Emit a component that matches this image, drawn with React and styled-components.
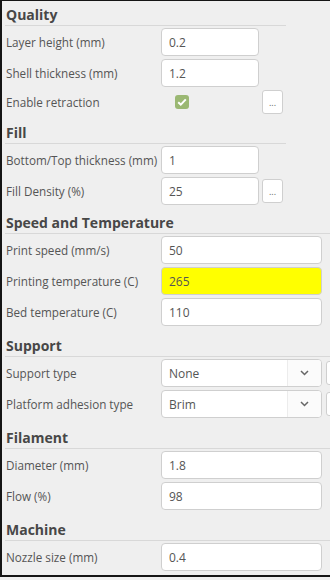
import React from 'react';
import styled, { createGlobalStyle } from 'styled-components';

const GlobalStyle = createGlobalStyle`
  html, body {
    margin: 0;
    padding: 0;
    background: #efefef;
    overflow: hidden;
  }
  body {
    font-family: 'Open Sans', 'Noto Sans', sans-serif;
  }
`;

const Panel = styled.div`
  width: 380px;
  box-sizing: border-box;
  border-top: 1px solid #151515;
  border-left: 2px solid #151515;
  border-bottom: 2px solid #151515;
  padding: 0 0 4px 3px;
  background: #efefef;
`;

const Section = styled.section`
  width: ${props => props.width}px;
  margin-top: ${props => props.offset}px;
`;

const SectionTitle = styled.h3`
  margin: 0;
  padding: 4px 0 0 1px;
  line-height: 20px;
  font-size: 14px;
  font-weight: 700;
  color: #474747;
  border-bottom: 1px solid #d8d8d8;
`;

const Rows = styled.div`
  display: flex;
  flex-direction: column;
  gap: 3px;
  padding-top: 2px;
`;

const Row = styled.div`
  display: flex;
  align-items: center;
  height: ${props => props.height || 28}px;
`;

const Label = styled.label`
  width: 156px;
  flex: none;
  font-size: 11.7px;
  color: #555;
  white-space: nowrap;
  padding-left: 1px;
  box-sizing: border-box;
`;

const Input = styled.input`
  width: ${props => props.width}px;
  height: 28px;
  box-sizing: border-box;
  border: 1px solid #cfcfcf;
  border-radius: 4px;
  background: ${props => (props.highlight ? '#ffff00' : '#fff')};
  padding: 0 7px;
  font-family: 'Open Sans', sans-serif;
  font-size: 12px;
  color: #555;
  outline: none;
`;

const MoreButton = styled.button`
  width: 21px;
  height: 24px;
  flex: none;
  margin-left: ${props => props.gap || 3}px;
  padding: 0;
  box-sizing: border-box;
  border: 1px solid #cfcfcf;
  border-radius: 3px;
  background: #fff;
  color: #666;
  font-family: 'Open Sans', sans-serif;
  font-size: 9px;
  line-height: 1;
`;

const Check = styled.span`
  width: 14px;
  height: 14px;
  margin-left: 14px;
  border-radius: 3px;
  background: #9bb873;
  display: flex;
  align-items: center;
  justify-content: center;
`;

const Spacer = styled.span`
  width: 70px;
`;

const Select = styled.div`
  width: 161px;
  height: 28px;
  flex: none;
  box-sizing: border-box;
  border: 1px solid #cfcfcf;
  border-radius: 4px;
  background: #fff;
  display: flex;
  overflow: hidden;
`;

const SelectValue = styled.span`
  flex: 1;
  padding-left: 7px;
  font-size: 12px;
  color: #555;
  display: flex;
  align-items: center;
`;

const SelectArrow = styled.span`
  width: 33px;
  border-left: 1px solid #ececec;
  background: #fbfbfb;
  display: flex;
  align-items: center;
  justify-content: center;
`;

const Chevron = () => (
  <svg width="9" height="6" viewBox="0 0 9 6">
    <path d="M1 1l3.5 3.5L8 1" fill="none" stroke="#666" strokeWidth="1.5" />
  </svg>
);

const Tick = () => (
  <svg width="10" height="8" viewBox="0 0 10 8">
    <path d="M1.2 4.2l2.6 2.4L8.8 1.4" fill="none" stroke="#fff" strokeWidth="2" />
  </svg>
);

const sections = [
  {
    title: 'Quality',
    width: 281,
    offset: 0,
    rows: [
      { label: 'Layer height (mm)', value: '0.2' },
      { label: 'Shell thickness (mm)', value: '1.2' },
      { label: 'Enable retraction', check: true, more: true }
    ]
  },
  {
    title: 'Fill',
    width: 281,
    offset: 5,
    rows: [
      { label: 'Bottom/Top thickness (mm)', value: '1' },
      { label: 'Fill Density (%)', value: '25', more: true }
    ]
  },
  {
    title: 'Speed and Temperature',
    width: 360,
    offset: 4,
    wide: true,
    rows: [
      { label: 'Print speed (mm/s)', value: '50' },
      { label: 'Printing temperature (C)', value: '265', highlight: true },
      { label: 'Bed temperature (C)', value: '110' }
    ]
  },
  {
    title: 'Support',
    width: 360,
    offset: 6,
    rows: [
      { label: 'Support type', select: 'None' },
      { label: 'Platform adhesion type', select: 'Brim' }
    ]
  },
  {
    title: 'Filament',
    width: 360,
    offset: 6,
    wide: true,
    rows: [
      { label: 'Diameter (mm)', value: '1.8' },
      { label: 'Flow (%)', value: '98' }
    ]
  },
  {
    title: 'Machine',
    width: 360,
    offset: 6,
    wide: true,
    rows: [{ label: 'Nozzle size (mm)', value: '0.4' }]
  }
];

const Field = ({ row, wide }) => {
  if (row.check) {
    return (
      <Row height={24}>
        <Label>{row.label}</Label>
        <Check>
          <Tick />
        </Check>
        <Spacer />
        <MoreButton>...</MoreButton>
      </Row>
    );
  }
  if (row.select) {
    return (
      <Row>
        <Label>{row.label}</Label>
        <Select>
          <SelectValue>{row.select}</SelectValue>
          <SelectArrow>
            <Chevron />
          </SelectArrow>
        </Select>
        <MoreButton gap={4} aria-label="more" />
      </Row>
    );
  }
  return (
    <Row>
      <Label>{row.label}</Label>
      <Input
        width={wide ? 161 : 98}
        highlight={row.highlight ? 1 : 0}
        defaultValue={row.value}
      />
      {row.more && <MoreButton>...</MoreButton>}
    </Row>
  );
};

export default function App() {
  return (
    <>
      <GlobalStyle />
      <Panel>
        {sections.map(section => (
          <Section key={section.title} width={section.width} offset={section.offset}>
            <SectionTitle>{section.title}</SectionTitle>
            <Rows>
              {section.rows.map(row => (
                <Field key={row.label} row={row} wide={section.wide} />
              ))}
            </Rows>
          </Section>
        ))}
      </Panel>
    </>
  );
}
